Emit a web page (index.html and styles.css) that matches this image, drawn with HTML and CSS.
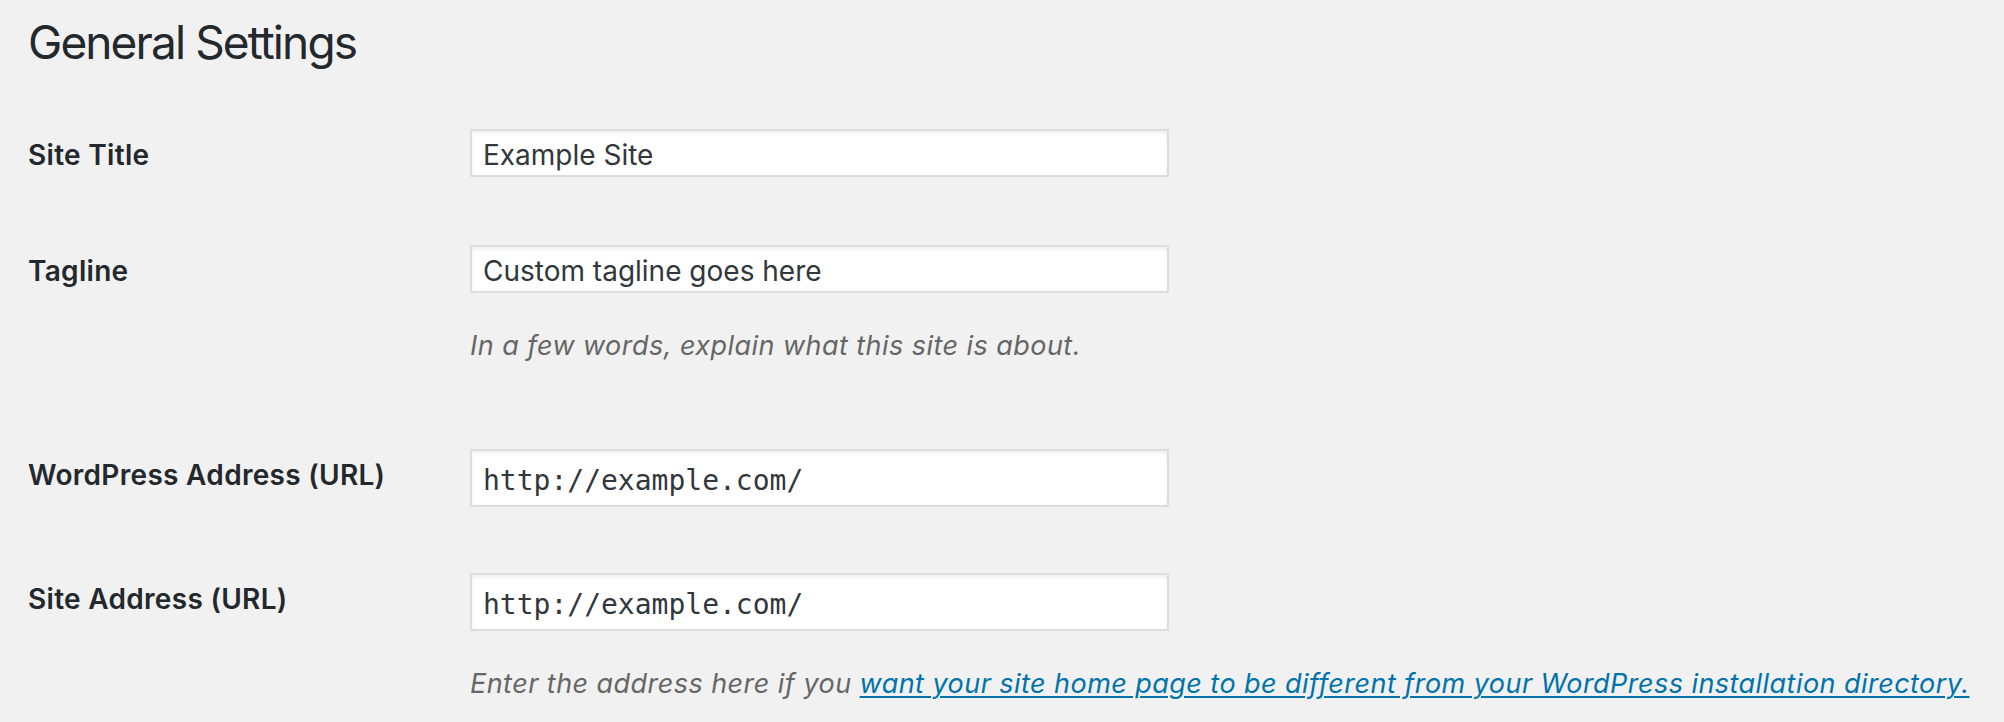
FILE: index.html
```html
<!DOCTYPE html>
<html lang="en">
<head>
<meta charset="utf-8">
<title>General Settings</title>
<link rel="stylesheet" href="styles.css">
</head>
<body>
<div class="wrap">
  <h1 class="page-title">General Settings</h1>
  <form class="form-table">
    <div class="form-row">
      <label class="form-label" for="blogname">Site Title</label>
      <div class="form-field">
        <input class="regular-text" id="blogname" type="text" value="Example Site">
      </div>
    </div>
    <div class="form-row">
      <label class="form-label" for="blogdescription">Tagline</label>
      <div class="form-field">
        <input class="regular-text" id="blogdescription" type="text" value="Custom tagline goes here">
        <p class="description">In a few words, explain what this site is about.</p>
      </div>
    </div>
    <div class="form-row form-row-code">
      <label class="form-label" for="siteurl">WordPress Address (URL)</label>
      <div class="form-field">
        <input class="regular-text code" id="siteurl" type="url" value="http://example.com/">
      </div>
    </div>
    <div class="form-row">
      <label class="form-label" for="home">Site Address (URL)</label>
      <div class="form-field">
        <input class="regular-text code" id="home" type="url" value="http://example.com/">
        <p class="description">Enter the address here if you <a class="desc-link" href="#">want your site home page to be different from your WordPress installation directory.</a></p>
      </div>
    </div>
  </form>
</div>
</body>
</html>
```

FILE: styles.css
```css
html, body {
  margin: 0;
  padding: 0;
}

body {
  background: #f1f1f1;
  color: #23282d;
  font-family: Inter, "Liberation Sans", "Noto Sans", sans-serif;
}

.wrap {
  padding: 0 28px;
}

.page-title {
  margin: 0;
  padding-top: 13px;
  font-size: 46px;
  font-weight: 400;
  line-height: 58px;
  letter-spacing: -1.9px;
  color: #23282d;
}

.form-table {
  margin-top: 26px;
}

.form-row {
  display: flex;
  align-items: flex-start;
}

.form-label {
  flex: none;
  width: 442px;
  padding: 40px 0;
  font-size: 28px;
  font-weight: 600;
  line-height: 36px;
  letter-spacing: 0.3px;
  color: #23282d;
}

.form-field {
  padding: 32px 0 30px;
}

.form-row-code .form-field {
  padding-bottom: 34px;
}

.regular-text {
  display: block;
  box-sizing: border-box;
  width: 699px;
  height: 48px;
  margin: 0;
  padding: 3px 11px 0;
  border: 2px solid #dddddd;
  border-radius: 0;
  box-shadow: inset 0 2px 4px rgba(0, 0, 0, 0.07);
  background: #ffffff;
  font-family: Inter, "Liberation Sans", "Noto Sans", sans-serif;
  font-size: 28px;
  color: #32373c;
  outline: none;
}

.regular-text.code {
  height: 58px;
  padding-top: 4px;
  font-family: "DejaVu Sans Mono", "Liberation Mono", monospace;
  font-size: 28px;
}

.description {
  margin: 33px 0 22px;
  font-size: 27px;
  font-style: italic;
  line-height: 39px;
  letter-spacing: 0.45px;
  color: #666666;
  white-space: nowrap;
}

.form-row:last-child .description {
  margin-bottom: 0;
}

.desc-link {
  color: #0073aa;
  text-decoration: underline;
  text-decoration-thickness: 2px;
  text-underline-offset: 3px;
}
```
